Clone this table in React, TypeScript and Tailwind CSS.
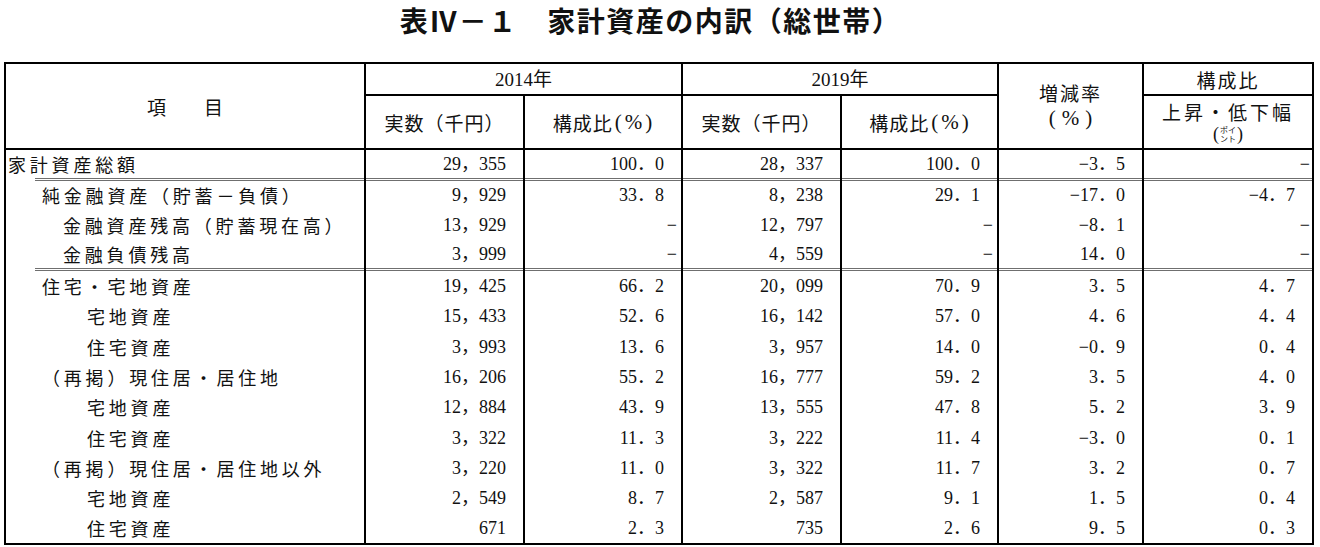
const JP = "font-['Noto_Sans_CJK_JP',sans-serif]";
const SERIF = "font-['Liberation_Serif','Noto_Sans_CJK_JP',serif]";

type Row = {
  label: string;
  pad: string;
  h: string;
  sep?: boolean;
  v: string[];
};

const rows: Row[] = [
  { label: '家計資産総額', pad: 'pl-[2px]', h: 'h-[28px]', v: ['29，355', '100．0', '28，337', '100．0', '−3．5', '−'] },
  { label: '純金融資産（貯蓄－負債）', pad: 'pl-[36px]', h: 'h-[31px]', sep: true, v: ['9，929', '33．8', '8，238', '29．1', '−17．0', '−4．7'] },
  { label: '金融資産残高（貯蓄現在高）', pad: 'pl-[57px]', h: 'h-[31px]', v: ['13，929', '−', '12，797', '−', '−8．1', '−'] },
  { label: '金融負債残高', pad: 'pl-[57px]', h: 'h-[28px]', v: ['3，999', '−', '4，559', '−', '14．0', '−'] },
  { label: '住宅・宅地資産', pad: 'pl-[36px]', h: 'h-[33px]', sep: true, v: ['19，425', '66．2', '20，099', '70．9', '3．5', '4．7'] },
  { label: '宅地資産', pad: 'pl-[81px]', h: 'h-[30px]', v: ['15，433', '52．6', '16，142', '57．0', '4．6', '4．4'] },
  { label: '住宅資産', pad: 'pl-[81px]', h: 'h-[31px]', v: ['3，993', '13．6', '3，957', '14．0', '−0．9', '0．4'] },
  { label: '（再掲）現住居・居住地', pad: 'pl-[36px]', h: 'h-[30px]', v: ['16，206', '55．2', '16，777', '59．2', '3．5', '4．0'] },
  { label: '宅地資産', pad: 'pl-[81px]', h: 'h-[30px]', v: ['12，884', '43．9', '13，555', '47．8', '5．2', '3．9'] },
  { label: '住宅資産', pad: 'pl-[81px]', h: 'h-[31px]', v: ['3，322', '11．3', '3，222', '11．4', '−3．0', '0．1'] },
  { label: '（再掲）現住居・居住地以外', pad: 'pl-[36px]', h: 'h-[30px]', v: ['3，220', '11．0', '3，322', '11．7', '3．2', '0．7'] },
  { label: '宅地資産', pad: 'pl-[81px]', h: 'h-[30px]', v: ['2，549', '8．7', '2，587', '9．1', '1．5', '0．4'] },
  { label: '住宅資産', pad: 'pl-[81px]', h: 'h-[30px]', v: ['671', '2．3', '735', '2．6', '9．5', '0．3'] },
];

function Sep({ indent }: { indent?: boolean }) {
  return (
    <div
      className={`h-[3px] shrink-0 border-t-[3px] border-double border-[#6f6f6f] ${indent ? 'ml-[29px]' : ''}`}
    />
  );
}

// half-width "(%)" drawn a bit larger, as in the printed table
function Pct({ wide }: { wide?: boolean }) {
  return (
    <span className={`inline-flex items-center ${SERIF} text-[21px] leading-none`}>
      <span>(</span>
      <span className={wide ? 'mx-[6px]' : 'mx-[2px]'}>%</span>
      <span>)</span>
    </span>
  );
}

function BodyRow({ row }: { row: Row }) {
  return (
    <div className={`grid grid-cols-[358px_159px_158px_159px_157px_145px_170px] ${row.h}`}>
      <div className="flex flex-col">
        {row.sep && <Sep indent />}
        <div className={`flex flex-1 items-center ${row.pad} ${JP} text-[18px] tracking-[3.8px] leading-none`}>
          {row.label}
        </div>
      </div>
      {row.v.map((val, i) => (
        <div key={i} className="flex flex-col border-l-2 border-black">
          {row.sep && <Sep />}
          <div
            className={`flex flex-1 items-center justify-end ${val === '−' ? (i === 5 ? 'pr-[2px]' : 'pr-[4px]') : 'pr-[17px]'} ${SERIF} text-[18px] leading-none`}
          >
            {val}
          </div>
        </div>
      ))}
    </div>
  );
}

export default function App() {
  return (
    <div className="w-[1320px] h-[547px] bg-white text-[#111] overflow-hidden">
      <div
        className={`h-[40px] flex items-center justify-center pr-[19px] ${JP} font-bold text-[28px] tracking-[1.5px] leading-none`}
      >
        表Ⅳ－１　家計資産の内訳（総世帯）
      </div>

      <div className="ml-[4px] mt-[22px] w-[1310px] border-2 border-black">
        {/* header */}
        <div className="flex h-[86px] border-b-2 border-black">
          <div className={`w-[358px] flex items-center justify-center ${JP} text-[19px] leading-none`}>
            項　　目
          </div>

          <div className="w-[317px] flex flex-col border-l-2 border-black">
            <div className={`h-[32px] flex items-center justify-center border-b-2 border-black ${SERIF} text-[19px] leading-none`}>
              2014年
            </div>
            <div className="flex flex-1">
              <div className={`w-[157px] flex items-center justify-center ${JP} text-[19px] tracking-[1px] leading-none`}>
                実数（千円）
              </div>
              <div className={`w-[158px] flex items-center justify-center gap-[2px] border-l-2 border-black ${JP} text-[19px] tracking-[1px] leading-none`}>
                構成比<Pct />
              </div>
            </div>
          </div>

          <div className="w-[316px] flex flex-col border-l-2 border-black">
            <div className={`h-[32px] flex items-center justify-center border-b-2 border-black ${SERIF} text-[19px] leading-none`}>
              2019年
            </div>
            <div className="flex flex-1">
              <div className={`w-[157px] flex items-center justify-center ${JP} text-[19px] tracking-[1px] leading-none`}>
                実数（千円）
              </div>
              <div className={`w-[157px] flex items-center justify-center gap-[2px] border-l-2 border-black ${JP} text-[19px] tracking-[1px] leading-none`}>
                構成比<Pct />
              </div>
            </div>
          </div>

          <div className={`w-[145px] flex flex-col items-center justify-center gap-[6px] border-l-2 border-black ${JP} text-[19px] leading-none`}>
            <span className="tracking-[2px]">増減率</span>
            <Pct wide />
          </div>

          <div className="w-[170px] flex flex-col border-l-2 border-black">
            <div className={`h-[32px] flex items-center justify-center border-b-2 border-black ${JP} text-[19px] tracking-[2px] leading-none`}>
              構成比
            </div>
            <div className="flex flex-1 flex-col items-center justify-center gap-[4px]">
              <span className={`${JP} text-[19px] tracking-[3px] leading-none`}>上昇・低下幅</span>
              <span className={`flex items-center ${SERIF} text-[18px] leading-none`}>
                <span>(</span>
                <span className={`flex flex-col items-center ${JP} text-[8px] leading-[9px] mx-[1px]`}>
                  <span>ポイ</span>
                  <span>ント</span>
                </span>
                <span>)</span>
              </span>
            </div>
          </div>
        </div>

        {/* body */}
        {rows.map((r, i) => (
          <BodyRow key={i} row={r} />
        ))}
      </div>
    </div>
  );
}
